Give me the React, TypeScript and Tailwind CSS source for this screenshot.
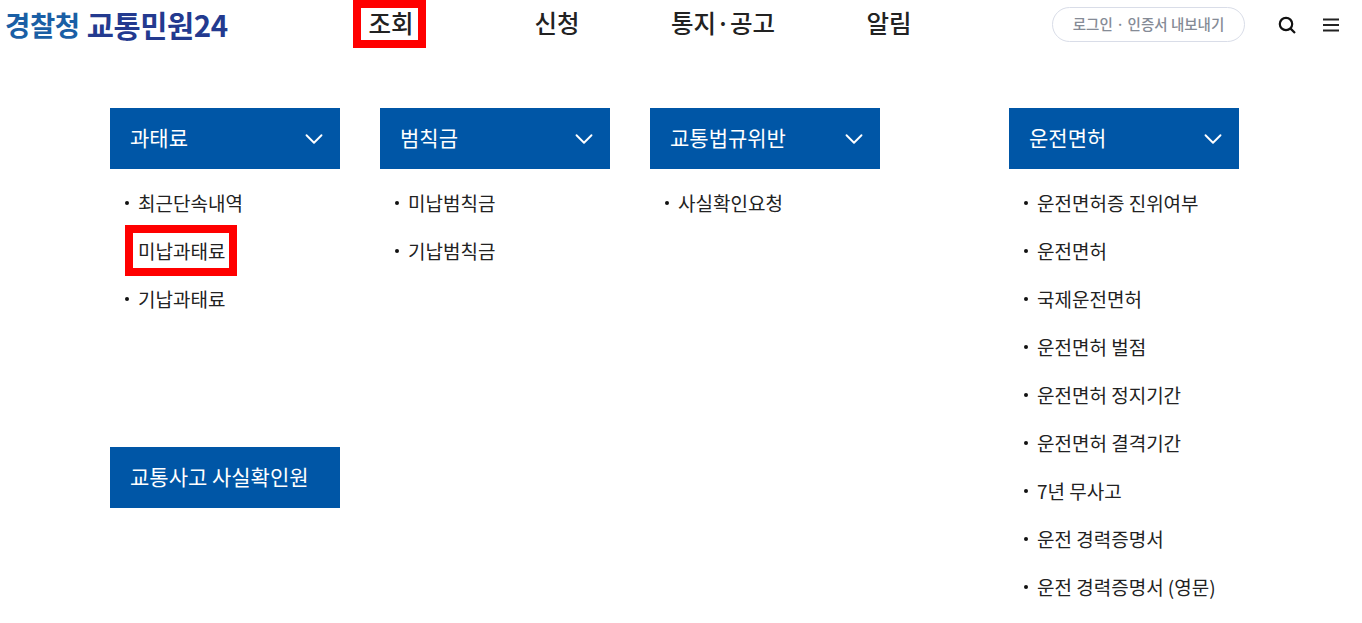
import { ChevronDown } from 'lucide-react'

const font = "font-['Noto_Sans_CJK_KR','Noto_Sans',sans-serif]"

const navItems = ['조회', '신청', '통지·공고', '알림']

const columns = [
  {
    title: '과태료',
    items: ['최근단속내역', '미납과태료', '기납과태료'],
    highlight: '미납과태료',
    extra: '교통사고 사실확인원',
  },
  { title: '범칙금', items: ['미납범칙금', '기납범칙금'] },
  { title: '교통법규위반', items: ['사실확인요청'] },
  {
    title: '운전면허',
    items: [
      '운전면허증 진위여부',
      '운전면허',
      '국제운전면허',
      '운전면허 벌점',
      '운전면허 정지기간',
      '운전면허 결격기간',
      '7년 무사고',
      '운전 경력증명서',
      '운전 경력증명서 (영문)',
    ],
  },
]

function Column({ col, className = '' }: { col: (typeof columns)[number]; className?: string }) {
  return (
    <div className={`w-[230px] shrink-0 ${className}`}>
      <div className="flex h-[61px] items-center justify-between bg-[#0056a6] pr-[11px] pb-[2px] pl-5 text-[21px] text-white">
        <span>{col.title}</span>
        <ChevronDown size={30} strokeWidth={1.5} className="mt-[2px]" />
      </div>
      <ul className="h-[278px] pt-[10px] text-[19px] text-[#222]">
        {col.items.map((item) => (
          <li key={item} className="relative flex h-[48px] items-center pl-[28px] whitespace-nowrap">
            {col.highlight === item ? (
              <span className="absolute top-[-2px] left-[15px] h-[51px] w-[112px] border-[8px] border-[#ff0000]" />
            ) : (
              <span className="absolute top-[22px] left-[15px] h-[4px] w-[4px] rounded-full bg-[#111]" />
            )}
            <span>{item}</span>
          </li>
        ))}
      </ul>
      {col.extra && (
        <div className="flex h-[61px] items-center bg-[#0056a6] pb-[2px] pl-5 text-[21px] text-white">{col.extra}</div>
      )}
    </div>
  )
}

export default function App() {
  return (
    <div className={`h-[623px] w-[1362px] overflow-hidden bg-white ${font}`}>
      <header className="flex h-[48px] items-center">
        <div className="mt-[2px] flex w-[308px] items-center gap-[7px] pl-[5px] leading-none font-bold whitespace-nowrap">
          <span className="text-[27.5px] tracking-[-0.4px] text-[#1a5fa5]">경찰청</span>
          <span className="text-[29.5px] tracking-[-0.4px] text-[#233a8f]">교통민원24</span>
        </div>
        <nav className="flex">
          {navItems.map((item) => (
            <div key={item} className="relative flex h-[48px] w-[166px] items-center justify-center pb-[1px] text-[24.5px] font-medium text-[#222]">
              {item === '조회' && (
                <span className="absolute top-0 left-[45px] h-[48px] w-[73px] border-[8px] border-[#ff0000]" />
              )}
              <span>{item}</span>
            </div>
          ))}
        </nav>
        <button className="ml-[80px] flex h-[35px] w-[193px] items-center justify-center rounded-full border border-[#d9dde8] text-[14.5px] font-medium text-[#858b96]">
          로그인 · 인증서 내보내기
        </button>
        <svg className="mt-[2px] ml-[32px]" width="20" height="20" viewBox="0 0 20 20" fill="none" stroke="#111" strokeWidth="2.2">
          <circle cx="9" cy="9" r="6.2" />
          <path d="M13.6 13.6 18 18" />
        </svg>
        <svg className="mt-[1px] ml-[25px]" width="18" height="16" viewBox="0 0 18 16" fill="none" stroke="#222" strokeWidth="2">
          <path d="M1 2.5h16M1 8h16M1 13.5h16" />
        </svg>
      </header>
      <main className="mt-[60px] flex pl-[110px]">
        <Column col={columns[0]} />
        <Column col={columns[1]} className="ml-10" />
        <Column col={columns[2]} className="ml-10" />
        <Column col={columns[3]} className="ml-[129px]" />
      </main>
    </div>
  )
}
